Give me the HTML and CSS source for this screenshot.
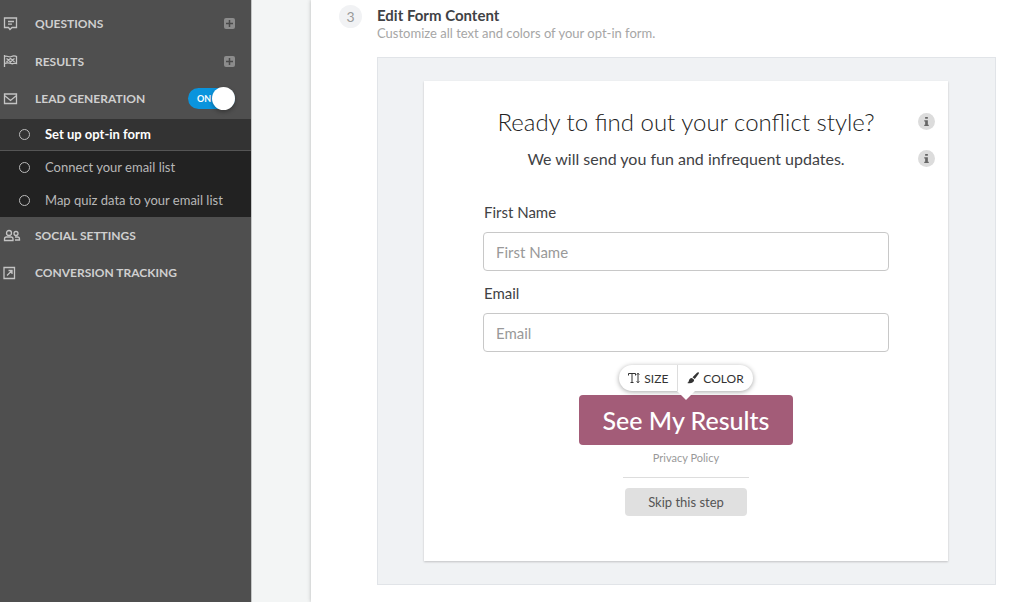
FILE: index.html
```html
<!DOCTYPE html>
<html lang="en">
<head>
<meta charset="utf-8">
<meta name="viewport" content="width=device-width, initial-scale=1">
<title>Edit Form Content</title>
<link rel="stylesheet" href="styles.css">
</head>
<body>
<div class="app">
  <nav class="sidebar" aria-label="Quiz builder">
    <div class="nav-row">
      <svg class="nav-icon" viewBox="0 0 18 16"><path d="M1.500 2h12v9.500H9l-2 2-1.500-2h-4zM5 5.500h6M5 8.200h4"/></svg>
      <a class="nav-link" href="#questions">QUESTIONS</a>
      <button class="add" type="button" aria-label="Add question"><svg viewBox="0 0 11 11"><path d="M5.500 2v7M2 5.500h7"/></svg></button>
    </div>
    <div class="nav-row">
      <svg class="nav-icon" viewBox="0 0 18 16"><path d="M1.500 2v12M1.500 3.500C4 2 6 5 8.500 3.500S12 3 13.500 3.500v7c-2-1-3.500 1-5.500 0s-4-1-6.500 0M3.500 5.500l2 1.500 2-1.500 2 1.500 2-1.500M3.500 9l2-2 2 2 2-2 2 2"/></svg>
      <a class="nav-link" href="#results">RESULTS</a>
      <button class="add" type="button" aria-label="Add result"><svg viewBox="0 0 11 11"><path d="M5.500 2v7M2 5.500h7"/></svg></button>
    </div>
    <div class="nav-row">
      <svg class="nav-icon" viewBox="0 0 18 16"><path d="M1.500 3h12v9.500h-12zM1.500 4.500l6 5 6-5"/></svg>
      <a class="nav-link" href="#lead">LEAD GENERATION</a>
      <label class="switch"><input type="checkbox" checked aria-label="Lead generation"><span class="switch-text">ON</span><span class="knob"></span></label>
    </div>
    <div class="submenu">
      <a class="sub-link active" href="#optin"><span class="ring"></span>Set up opt-in form</a>
      <a class="sub-link" href="#connect"><span class="ring"></span>Connect your email list</a>
      <a class="sub-link" href="#map"><span class="ring"></span>Map quiz data to your email list</a>
    </div>
    <div class="nav-row">
      <svg class="nav-icon" viewBox="0 0 18 16"><circle cx="6" cy="5" r="2.500"/><path d="M1.500 12.500V11q0-2 2-2h4.500q2 0 2 2v1.500z"/><circle cx="13" cy="5.500" r="2"/><path d="M12 9h2.500q2 0 2 2v1H12"/></svg>
      <a class="nav-link" href="#social">SOCIAL SETTINGS</a>
    </div>
    <div class="nav-row">
      <svg class="nav-icon" viewBox="0 0 18 16"><path d="M1 2.500h10.500v11H1zM4 10.500l4.500-4.500M5.500 5.500H9v3.500"/></svg>
      <a class="nav-link" href="#tracking">CONVERSION TRACKING</a>
    </div>
  </nav>

  <main class="main">
    <header class="step">
      <span class="step-number">3</span>
      <div>
        <h1 class="step-title">Edit Form Content</h1>
        <p class="step-note">Customize all text and colors of your opt-in form.</p>
      </div>
    </header>
    <section class="panel">
      <form class="card">
        <div class="line">
          <h2 class="headline">Ready to find out your conflict style?</h2>
          <button class="info" type="button" aria-label="About the headline"><svg viewBox="0 0 7 10"><path d="M2 0h3v2H2zM1 3.500h4v5h1V10H1V8.500h1V5H1z"/></svg></button>
        </div>
        <div class="line">
          <p class="tagline">We will send you fun and infrequent updates.</p>
          <button class="info" type="button" aria-label="About the description"><svg viewBox="0 0 7 10"><path d="M2 0h3v2H2zM1 3.500h4v5h1V10H1V8.500h1V5H1z"/></svg></button>
        </div>
        <div class="fields">
          <label class="label" for="first-name">First Name</label>
          <input class="input" id="first-name" type="text" placeholder="First Name">
          <label class="label" for="email">Email</label>
          <input class="input" id="email" type="email" placeholder="Email">
        </div>
        <div class="actions">
          <div class="toolbar">
            <button class="tool" type="button"><svg class="tool-icon" viewBox="0 0 12 12"><path class="stroke" d="M.5 3.500V1.500h7v2M4 1.500v9M2.500 10.500h3M10 1.500v9M8.700 2.700L10 1.200l1.300 1.500M8.700 9.300L10 10.800l1.300-1.500"/></svg>SIZE</button>
            <button class="tool" type="button"><svg class="tool-icon" viewBox="0 0 12 12"><path d="M11.500.3c.7.500.4 1.200 0 1.800L7.800 7 5.500 5.200 10 .8c.5-.5 1-.8 1.500-.5zM4.900 5.900L7.100 7.700c.2 2.500-2.600 4.300-7 3.300 1.700-.7 1.500-1.600 2-3 .4-1.300 1.500-2 2.800-2.100z"/></svg>COLOR</button>
          </div>
          <button class="submit" type="submit">See My Results</button>
          <a class="privacy" href="#privacy">Privacy Policy</a>
          <hr class="rule">
          <button class="skip" type="button">Skip this step</button>
        </div>
      </form>
    </section>
  </main>
</div>
</body>
</html>
```
FILE: styles.css
```css
* { box-sizing: border-box; }
body {
  margin: 0;
  font-family: Lato, "Open Sans", sans-serif;
  color: #3f4245;
  background: #fff;
}
button, input { font-family: inherit; }
button { border: 0; padding: 0; cursor: pointer; }
a { text-decoration: none; color: inherit; }
h1, h2, p { margin: 0; font-weight: 400; }
svg { display: block; }

.app { display: flex; min-height: 100vh; background: #f3f5f5; }

/* Sidebar */
.sidebar {
  width: 252px;
  flex: none;
  padding-top: 5px;
  background: #4f4f4f;
  border-right: 1px solid #c4c6c6;
}
.nav-row {
  display: flex;
  align-items: center;
  height: 37px;
  padding: 0 16px 0 3px;
  color: #cfcfcf;
}
.nav-row:nth-child(2) { height: 38px; }
.nav-icon {
  width: 18px;
  height: 16px;
  margin-right: 14px;
  fill: none;
  stroke: #c4c4c4;
  stroke-width: 1.3;
}
.nav-link { flex: 1; font-size: 12px; font-weight: 700; }
.add {
  width: 11px;
  height: 11px;
  border-radius: 2px;
  background: #8c8c8c;
}
.add svg { fill: none; stroke: #4a4a4a; stroke-width: 1.5; }
.switch {
  position: relative;
  display: flex;
  align-items: center;
  width: 47px;
  height: 21px;
  padding-left: 9px;
  border-radius: 11px;
  background: #0a94dd;
}
.switch input { position: absolute; inset: 0; margin: 0; opacity: 0; }
.switch-text { font-size: 9px; font-weight: 700; color: #fff; }
.knob {
  position: absolute;
  top: -1px;
  right: 0;
  width: 23px;
  height: 23px;
  border-radius: 50%;
  background: #fff;
  box-shadow: 0 2px 4px rgba(0, 0, 0, .3);
}
.submenu { margin-top: 2px; background: #222; }
.sub-link {
  display: flex;
  align-items: center;
  height: 33px;
  padding: 0 0 1px 19px;
  font-size: 13px;
  color: #b8b8b8;
}
.sub-link.active {
  height: 32px;
  color: #fff;
  font-weight: 700;
  background: #333;
  border-bottom: 1px solid #555;
}
.ring {
  width: 11px;
  height: 11px;
  margin-right: 15px;
  border: 1px solid #bbb;
  border-radius: 50%;
}

/* Main column */
.main {
  flex: 1;
  min-width: 0;
  margin-left: 59px;
  padding: 5px 28px 17px;
  background: #fff;
  box-shadow: 0 0 4px rgba(0, 0, 0, .25);
}
.step { display: flex; gap: 15px; height: 52px; }
.step-number {
  width: 23px;
  height: 23px;
  border-radius: 50%;
  background: #f1f2f4;
  font-size: 14px;
  line-height: 23px;
  text-align: center;
  color: #999;
}
.step-title { font-size: 15px; line-height: 20px; font-weight: 700; }
.step-note { font-size: 13px; line-height: 17px; color: #a6a6a6; }
.panel {
  margin-left: 38px;
  padding: 23px 47px 23px 46px;
  background: #f0f2f4;
  border: 1px solid #e1e4e8;
}
.card {
  padding: 22px 13px 45px;
  background: #fff;
  box-shadow: 0 1px 2px rgba(0, 0, 0, .2);
}
.line {
  display: grid;
  grid-template-columns: 17px 1fr 17px;
  align-items: center;
  height: 37px;
  text-align: center;
}
.line > :first-child { grid-column: 2; }
.headline { font-size: 24px; font-weight: 300; color: #222; }
.tagline { font-size: 16px; }
.info {
  display: grid;
  place-items: center;
  width: 17px;
  height: 17px;
  border-radius: 50%;
  background: #dcdcdc;
}
.info svg { width: 7px; height: 9px; fill: #666; }
.fields { padding: 23px 46px 0; }
.label {
  display: block;
  height: 32px;
  padding-left: 1px;
  font-size: 15px;
  line-height: 24px;
}
.input {
  display: block;
  width: 100%;
  height: 39px;
  margin-bottom: 10px;
  padding: 0 12px;
  border: 1px solid #c8c8c8;
  border-radius: 4px;
  font-size: 15px;
  background: #fff;
}
.input::placeholder { color: #999; opacity: 1; }
.actions { display: flex; flex-direction: column; align-items: center; }
.toolbar {
  position: relative;
  display: flex;
  height: 26px;
  margin: 3px 0 4px;
  border-radius: 13px;
  background: #fff;
  box-shadow: 0 1px 5px rgba(0, 0, 0, .35);
}
.toolbar::after {
  content: "";
  position: absolute;
  top: 100%;
  left: 50%;
  margin-left: -9px;
  border: 9px solid transparent;
  border-top-color: #fff;
  border-bottom: 0;
}
.tool {
  display: flex;
  align-items: center;
  gap: 4px;
  padding: 0 9px;
  font-size: 12px;
  color: #333;
  background: none;
}
.tool + .tool { border-left: 1px solid #ddd; }
.tool-icon { width: 12px; height: 12px; fill: #333; }
.tool-icon .stroke { fill: none; stroke: #333; }
.submit {
  height: 50px;
  padding: 0 24px;
  border-radius: 4px;
  font-size: 25px;
  font-weight: 500;
  color: #fff;
  background: #a35c78;
}
.privacy {
  margin-top: 4px;
  font-size: 11px;
  line-height: 18px;
  color: #999;
}
.rule {
  width: 126px;
  margin: 10px 0;
  border: 0;
  border-top: 1px solid #ddd;
}
.skip {
  height: 28px;
  padding: 0 23px;
  border-radius: 4px;
  font-size: 13px;
  color: #555;
  background: #e0e0e0;
}
```
